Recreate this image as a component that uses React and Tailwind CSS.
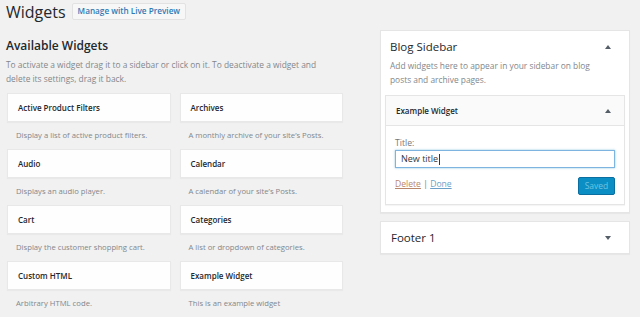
const widgets = [
  { title: "Active Product Filters", desc: "Display a list of active product filters." },
  { title: "Archives", desc: "A monthly archive of your site’s Posts." },
  { title: "Audio", desc: "Displays an audio player." },
  { title: "Calendar", desc: "A calendar of your site’s Posts." },
  { title: "Cart", desc: "Display the customer shopping cart." },
  { title: "Categories", desc: "A list or dropdown of categories." },
  { title: "Custom HTML", desc: "Arbitrary HTML code." },
  { title: "Example Widget", desc: "This is an example widget" },
];

function Arrow({ up }) {
  return (
    <svg width="6" height="4" viewBox="0 0 6 4" className="shrink-0">
      <polygon points={up ? "3,0 6,4 0,4" : "0,0 6,0 3,4"} fill="#555d66" />
    </svg>
  );
}

function WidgetItem({ title, desc }) {
  return (
    <div className="h-[56px]">
      <div className="h-[29px] bg-[#fefefe] border border-[#e8e8e8] shadow-[0_1px_1px_rgba(0,0,0,0.03)] flex items-center pl-[10px]">
        <span className="text-[8px] font-semibold text-[#23282d]">{title}</span>
      </div>
      <div className="h-[27px] flex items-center pl-[9px] text-[7.7px] text-[#82878c]">{desc}</div>
    </div>
  );
}

export default function App() {
  return (
    <div className="w-[640px] h-[317px] overflow-hidden bg-[#f1f1f1] font-['Open_Sans',sans-serif] text-[#23282d]">
      <div className="flex items-center pl-[6px] pt-[4px] h-[19px] gap-[6px]">
        <h1 className="text-[16px] leading-none font-normal text-[#23282d]">Widgets</h1>
        <button className="h-[17px] px-[5px] bg-[#f7f7f7] border border-[#e2e2e2] rounded-[2px] text-[8.2px] font-semibold text-[#2f7ab5]">
          Manage with Live Preview
        </button>
      </div>

      <div className="flex gap-[37px] pl-[6px]">
        <div className="w-[337px]">
          <h2 className="mt-[19px] text-[12px] leading-[16px] font-semibold text-[#23282d]">Available Widgets</h2>
          <p className="mt-[4px] w-[318px] text-[8.4px] leading-[14px] text-[#82878c]">
            To activate a widget drag it to a sidebar or click on it. To deactivate a widget and delete its settings, drag it back.
          </p>
          <div className="mt-[7px] grid grid-cols-2 gap-x-[9px] pl-px">
            {widgets.map((w) => (
              <WidgetItem key={w.title} {...w} />
            ))}
          </div>
        </div>

        <div className="w-[250px] pt-[11px]">
          <div className="bg-white border border-[#e5e5e5] shadow-[0_1px_1px_rgba(0,0,0,0.04)] px-[4px] pb-[7px]">
            <div className="flex items-center justify-between pl-[5px] pr-[14px] pt-[8px]">
              <span className="text-[11.5px] leading-[16px]">Blog Sidebar</span>
              <Arrow up />
            </div>
            <p className="pl-[5px] pr-[20px] mt-[4px] text-[8.4px] leading-[14px] text-[#82878c]">
              Add widgets here to appear in your sidebar on blog posts and archive pages.
            </p>
            <div className="mt-[8px] border border-[#e5e5e5] shadow-[0_1px_1px_rgba(0,0,0,0.04)]">
              <div className="h-[30px] bg-[#fafafa] border-b border-[#e5e5e5] flex items-center justify-between pl-[10px] pr-[13px]">
                <span className="text-[8px] font-semibold">Example Widget</span>
                <Arrow up />
              </div>
              <div className="px-[9px] pt-[12px] pb-[9px] bg-white">
                <div className="text-[8.6px] leading-[10px] text-[#72777c]">Title:</div>
                <div className="mt-[2px] h-[18px] border border-[#7eb4e0] shadow-[0_0_2px_rgba(30,140,190,0.5)] flex items-center pl-[5px] text-[9px] text-[#32373c]">
                  New title<span className="ml-px w-px h-[11px] bg-[#32373c]" />
                </div>
                <div className="mt-[9px] flex items-start justify-between">
                  <div className="pt-[2px] text-[8.6px] leading-[10px]">
                    <span className="underline text-[#b9866c]">Delete</span>
                    <span className="text-[#72777c]"> | </span>
                    <span className="underline text-[#6c9fc8]">Done</span>
                  </div>
                  <button className="w-[37px] h-[18px] bg-[#0a8ec3] border border-[#0a6fa0] rounded-[2px] text-[8.5px] text-[#6cc4e2]">
                    Saved
                  </button>
                </div>
              </div>
            </div>
          </div>
          <div className="mt-[8px] h-[33px] bg-white border border-[#e5e5e5] shadow-[0_1px_1px_rgba(0,0,0,0.04)] flex items-center justify-between pl-[10px] pr-[18px]">
            <span className="text-[11.5px] leading-[16px]">Footer 1</span>
            <Arrow />
          </div>
        </div>
      </div>
    </div>
  );
}
